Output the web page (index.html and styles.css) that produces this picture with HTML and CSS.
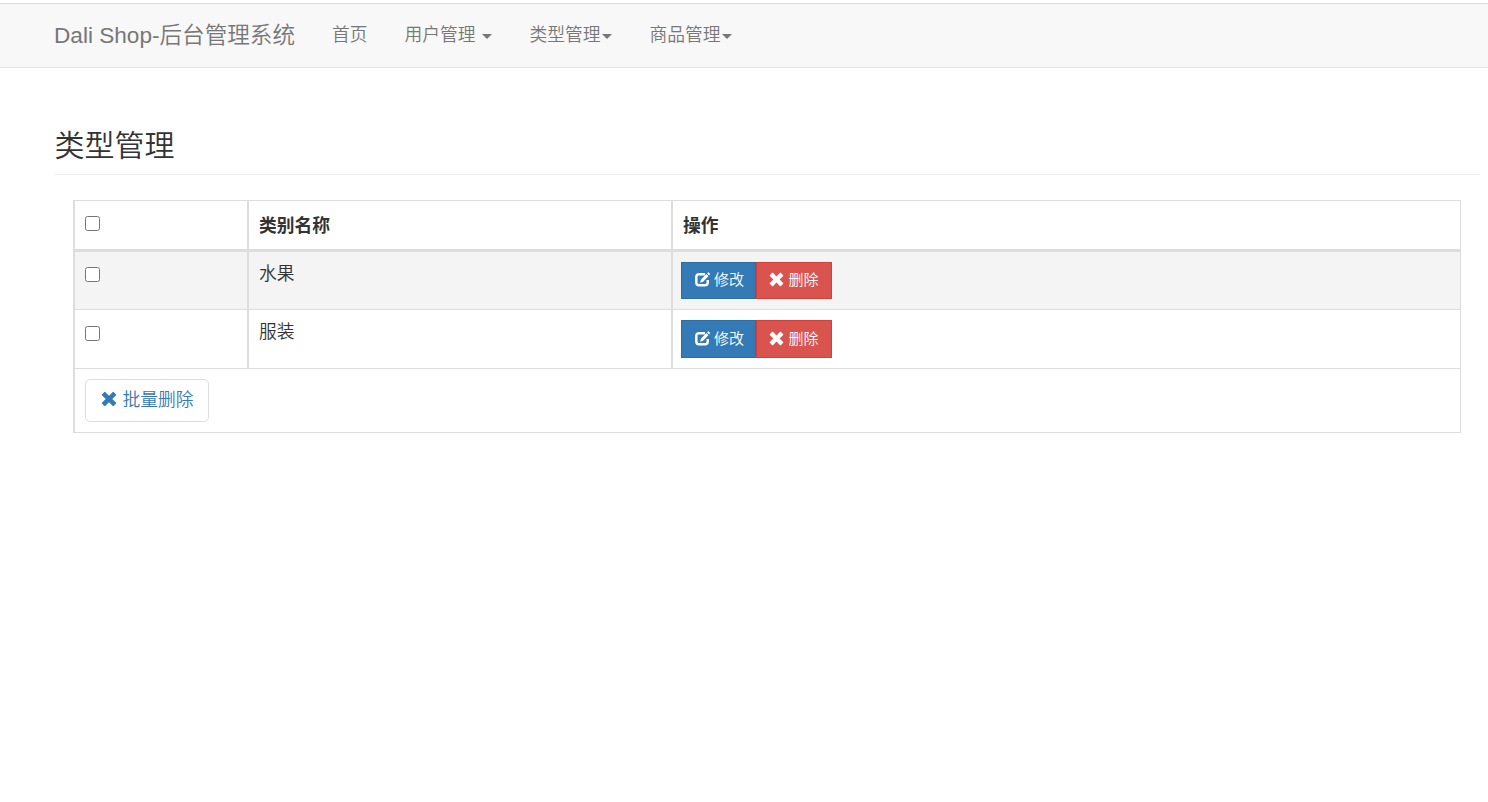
FILE: index.html
```html
<!DOCTYPE html>
<html lang="zh-CN">
<head>
    <meta charset="UTF-8">
    <meta name="viewport" content="width=device-width, initial-scale=1.0">
    <title>类型管理</title>
    <link rel="stylesheet" href="styles.css">
</head>
<body>
    <!-- 图标 -->
    <svg class="symbols" width="0" height="0">
        <symbol id="icon-edit" viewBox="0 0 16 16">
            <path fill="none" stroke="currentColor" stroke-width="2.6" d="M10.6 2.3H4.4Q1.4 2.3 1.4 5.2V11.2Q1.4 14.1 4.4 14.1H10.6Q13.6 14.1 13.6 11.2V8.6"/>
            <path fill="currentColor" d="M12.1 2.2L14.3 4.4L8.6 10.4L5.4 11.4L6.3 8.2ZM12.9 1.4L13.8 .5Q14.2 .2 14.6 .5L15.8 1.7Q16.2 2.1 15.8 2.6L15 3.6Z"/>
        </symbol>
        <symbol id="icon-remove" viewBox="0 0 16 16">
            <path fill="currentColor" d="M4.2 .9L8 4.7L11.8 .9Q12.2 .5 12.6 .9L15.1 3.4Q15.5 3.8 15.1 4.2L11.3 8L15.1 11.8Q15.5 12.2 15.1 12.6L12.6 15.1Q12.2 15.5 11.8 15.1L8 11.3L4.2 15.1Q3.8 15.5 3.4 15.1L.9 12.6Q.5 12.2 .9 11.8L4.7 8L.9 4.2Q.5 3.8 .9 3.4L3.4 .9Q3.8 .5 4.2 .9Z"/>
        </symbol>
    </svg>

    <!-- 导航 -->
    <nav class="navbar">
        <a class="navbar-brand" href="#">Dali Shop-后台管理系统</a>
        <ul class="navbar-nav">
            <li><a href="#">首页</a></li>
            <li><a href="#">用户管理 <span class="caret"></span></a></li>
            <li><a href="#">类型管理<span class="caret"></span></a></li>
            <li><a href="#">商品管理<span class="caret"></span></a></li>
        </ul>
    </nav>

    <div class="container">
        <h2 class="page-header">类型管理</h2>

        <table class="table">
            <colgroup>
                <col class="col-check">
                <col class="col-name">
                <col>
            </colgroup>
            <thead>
                <tr>
                    <th><input type="checkbox"></th>
                    <th>类别名称</th>
                    <th>操作</th>
                </tr>
            </thead>
            <tbody>
                <tr class="striped">
                    <td><input type="checkbox"></td>
                    <td>水果</td>
                    <td class="actions">
                        <div class="btn-group">
                            <a class="btn btn-primary" href="#"><svg class="icon"><use href="#icon-edit"/></svg>修改</a>
                            <a class="btn btn-danger" href="#"><svg class="icon"><use href="#icon-remove"/></svg>删除</a>
                        </div>
                    </td>
                </tr>
                <tr class="plain">
                    <td><input type="checkbox"></td>
                    <td>服装</td>
                    <td class="actions">
                        <div class="btn-group">
                            <a class="btn btn-primary" href="#"><svg class="icon"><use href="#icon-edit"/></svg>修改</a>
                            <a class="btn btn-danger" href="#"><svg class="icon"><use href="#icon-remove"/></svg>删除</a>
                        </div>
                    </td>
                </tr>
                <tr class="batch">
                    <td colspan="3">
                        <a class="btn-batch" href="#"><svg class="icon"><use href="#icon-remove"/></svg>批量删除</a>
                    </td>
                </tr>
            </tbody>
        </table>
    </div>
</body>
</html>
```

FILE: styles.css
```css
* {
    box-sizing: border-box;
}
body {
    margin: 0;
    padding-top: 3px;
    font-family: "Liberation Sans", "Noto Sans CJK SC", sans-serif;
    font-size: 17.75px;
    font-weight: 350;
    line-height: 25px;
    color: #333;
    background-color: #fff;
}
a {
    text-decoration: none;
}
.symbols {
    display: block;
}

/* 导航栏 */
.navbar {
    display: flex;
    align-items: center;
    height: 65px;
    padding-left: 54px;
    border-top: 1px solid #dcdcdc;
    border-bottom: 1px solid #e4e4e4;
    background-color: #f8f8f8;
}
.navbar a {
    color: #777;
    white-space: nowrap;
}
.navbar-brand {
    width: 278px;
    font-size: 22.6px;
}
.navbar-nav {
    display: flex;
    gap: 37px;
    margin: 0;
    padding: 0;
    list-style: none;
}
.caret {
    display: inline-block;
    margin-left: 2px;
    vertical-align: middle;
    border-top: 5px solid #777;
    border-left: 5px solid transparent;
    border-right: 5px solid transparent;
}

.container {
    padding: 57px 8px 0 55px;
}
.page-header {
    margin: 0 0 25px;
    height: 50px;
    border-bottom: 1px solid #eee;
    font-size: 30px;
    font-weight: 350;
    line-height: 41px;
    text-indent: -0.5px;
}

/* 表格 */
.table {
    width: 1388px;
    margin-left: 18px;
    table-layout: fixed;
    border-collapse: separate;
    border-spacing: 0;
    border-top: 1px solid #ddd;
    border-left: 2px solid #ddd;
}
.col-check {
    width: 174px;
}
.col-name {
    width: 424px;
}
th, td {
    padding: 10px 10px 0;
    text-align: left;
    vertical-align: top;
    border-right: 2px solid #ddd;
    border-bottom: 1px solid #ddd;
}
th:last-child, td:last-child {
    border-right-width: 1px;
}
th {
    height: 51px;
    padding-top: 13px;
    font-weight: bold;
    border-bottom-width: 3px;
}
input[type="checkbox"] {
    display: block;
    width: 15px;
    height: 15px;
    margin: 2px 0 0;
}
td input[type="checkbox"] {
    margin-top: 5px;
}
.striped td {
    height: 58px;
    background-color: #f4f4f4;
}
.plain td {
    height: 59px;
}
.plain input[type="checkbox"] {
    margin-top: 6px;
}
.batch td {
    height: 64px;
}
td.actions {
    padding-left: 8px;
}

/* 按钮 */
.btn-group {
    display: flex;
}
.btn {
    display: flex;
    align-items: center;
    justify-content: center;
    gap: 4px;
    width: 76px;
    height: 37px;
    padding-bottom: 2px;
    color: #fff;
    font-size: 15px;
    border: 1px solid;
}
.plain .btn {
    height: 38px;
}
.btn-primary {
    width: 75px;
    padding-left: 2px;
    background-color: #337ab7;
    border-color: #2e6da4;
}
.btn-danger {
    background-color: #d9534f;
    border-color: #d43f3a;
}
.icon {
    width: 15px;
    height: 15px;
}
.btn-batch {
    display: flex;
    align-items: center;
    justify-content: center;
    gap: 5px;
    width: 124px;
    height: 43px;
    padding: 0 0 1px 1px;
    border: 1px solid #ddd;
    border-radius: 5px;
    color: #337ab7;
    background-color: #fff;
}
.btn-batch .icon {
    width: 16px;
    height: 16px;
    margin-bottom: 3px;
}
```
